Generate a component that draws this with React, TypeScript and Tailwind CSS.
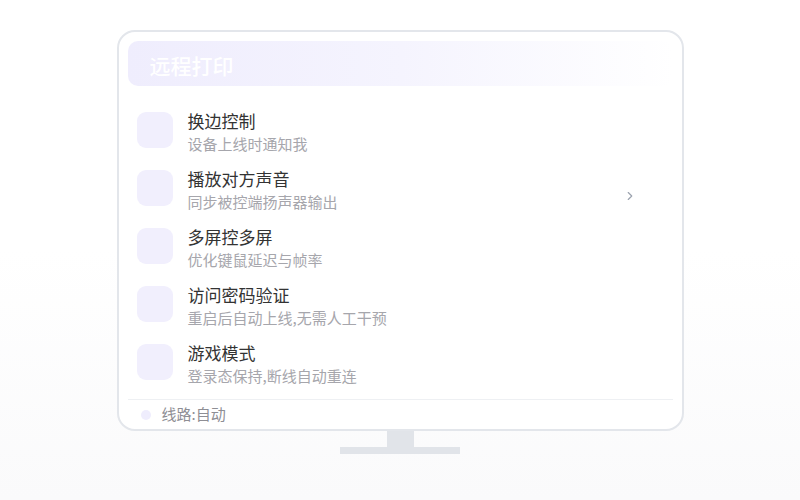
import React from 'react';
import { ChevronRight } from 'lucide-react';

const items = [
  { title: '换边控制', desc: '设备上线时通知我' },
  { title: '播放对方声音', desc: '同步被控端扬声器输出', arrow: true },
  { title: '多屏控多屏', desc: '优化键鼠延迟与帧率' },
  { title: '访问密码验证', desc: '重启后自动上线,无需人工干预' },
  { title: '游戏模式', desc: '登录态保持,断线自动重连' },
];

const App: React.FC = () => {
  return (
    <div
      className="w-[800px] h-[500px] bg-gradient-to-b from-white via-white to-[#fafafb] flex flex-col items-center pt-[30px]"
      style={{ fontFamily: '"Noto Sans CJK SC", "Noto Sans", sans-serif' }}
    >
      {/* screen */}
      <div className="w-[567px] h-[401px] border-2 border-[#e3e6eb] rounded-[18px] bg-white px-[9px] pt-[9px] flex flex-col">
        <div className="h-[45px] shrink-0 rounded-[10px] bg-gradient-to-r from-[#efedfd] via-[#f5f4fe] to-white flex items-center pl-[22px] pt-[3px]">
          <span className="text-white text-[21px] font-medium leading-none">远程打印</span>
        </div>

        <div className="flex flex-col pt-[23px] pl-[9px] pr-[36px]">
          {items.map((it) => (
            <div key={it.title} className="h-[58px] flex items-start">
              <div className="w-[36px] h-[36px] mt-[3px] rounded-[9px] bg-[#f1effd] shrink-0" />
              <div className="ml-[15px] flex flex-col flex-1">
                <span className="text-[17px] leading-[24px] text-[#333333]">{it.title}</span>
                <span className="text-[15px] leading-[22px] text-[#a6a6ac]">{it.desc}</span>
              </div>
              {it.arrow && (
                <ChevronRight size={14} strokeWidth={2} className="text-[#9ca3af] self-center" />
              )}
            </div>
          ))}
        </div>

        <div className="mt-auto border-t border-[#eef0f3] h-[33px] flex items-center pl-[13px]">
          <span className="w-[10px] h-[10px] rounded-full bg-[#efedfd]" />
          <span className="ml-[11px] text-[15px] text-[#8e8e94]">线路:自动</span>
        </div>
      </div>

      {/* stand */}
      <div className="w-[27px] h-[16px] bg-[#e1e4e9]" />
      <div className="w-[120px] h-[7px] bg-[#e1e4e9]" />
    </div>
  );
};

export default App;
